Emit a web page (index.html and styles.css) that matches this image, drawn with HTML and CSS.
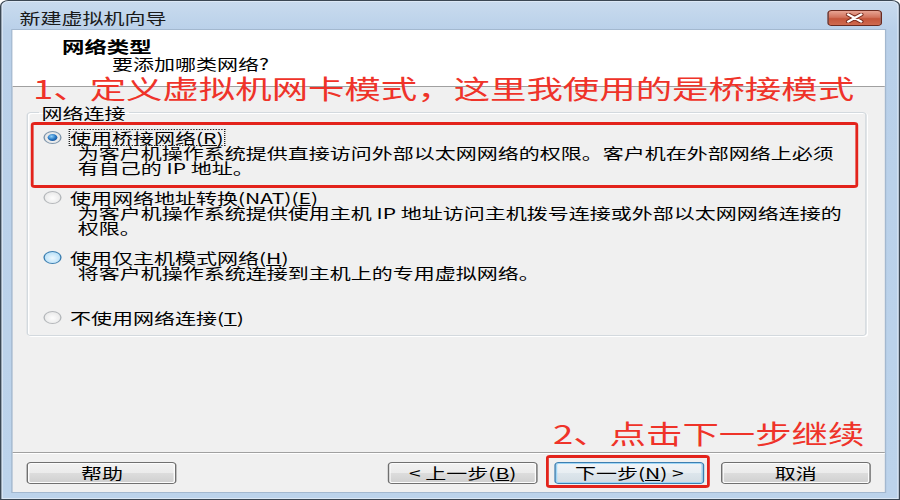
FILE: index.html
```html
<!DOCTYPE html>
<html lang="zh-CN">
<head>
  <meta charset="UTF-8">
  <title>新建虚拟机向导</title>
  <link rel="stylesheet" href="styles.css">
</head>
<body>
  <!-- the shot is stretched sideways, so the whole dialog is drawn narrow and scaled -->
  <div class="stage">
    <div class="window">
      <div class="titlebar">
        <span class="title">新建虚拟机向导</span>
        <span class="close">
          <svg width="13" height="10" viewBox="0 0 13 10">
            <path d="M2 1.5 L11 8.5 M11 1.5 L2 8.5" stroke="#7a2a1c" stroke-width="3.8" stroke-linecap="round"/>
            <path d="M2 1.5 L11 8.5 M11 1.5 L2 8.5" stroke="#fff" stroke-width="2.2" stroke-linecap="round"/>
          </svg>
        </span>
      </div>

      <div class="client">
        <div class="head">
          <div class="head-title">网络类型</div>
          <div class="head-sub">要添加哪类网络?</div>
        </div>

        <div class="main">
          <fieldset class="group">
            <legend>网络连接</legend>

            <div class="opt marked">
              <div class="opt-row"><span class="radio on"></span><span class="label focus">使用桥接网络(<u>R</u>)</span></div>
              <div class="desc">为客户机操作系统提供直接访问外部以太网网络的权限。客户机在外部网络上必须<br>有自己的 IP 地址。</div>
            </div>

            <div class="opt">
              <div class="opt-row"><span class="radio dim"></span><span class="label">使用网络地址转换(NAT)(<u>E</u>)</span></div>
              <div class="desc">为客户机操作系统提供使用主机 IP 地址访问主机拨号连接或外部以太网网络连接的<br>权限。</div>
            </div>

            <div class="opt">
              <div class="opt-row"><span class="radio hot"></span><span class="label">使用仅主机模式网络(<u>H</u>)</span></div>
              <div class="desc">将客户机操作系统连接到主机上的专用虚拟网络。</div>
            </div>

            <div class="opt">
              <div class="opt-row"><span class="radio dim"></span><span class="label">不使用网络连接(<u>T</u>)</span></div>
            </div>
          </fieldset>

          <div class="footer">
            <button class="btn help">帮助</button>
            <button class="btn">&lt; 上一步(<u>B</u>)</button>
            <span class="btn-wrap">
              <button class="btn default">下一步(<u>N</u>) &gt;</button>
              <span class="mark-box"></span>
            </span>
            <button class="btn">取消</button>
          </div>
        </div>

        <div class="note note-1">1、定义虚拟机网卡模式，这里我使用的是桥接模式</div>
        <div class="note note-2">2、点击下一步继续</div>
      </div>
    </div>
  </div>
</body>
</html>
```

FILE: styles.css
```css
body {
  margin: 0;
  overflow: hidden;
  background: #fff;
  font-family: "Noto Sans CJK SC", "Noto Sans", sans-serif;
  font-size: 15px;
  color: #000;
}
.stage {
  width: 642.86px;
  height: 500px;
  transform: scaleX(1.4);
  transform-origin: 0 0;
}
.window {
  box-sizing: border-box;
  height: 500px;
  display: flex;
  flex-direction: column;
  border: 1px solid #3b4753;
  border-radius: 6px 6px 0 0;
  background: linear-gradient(#c9dbee, #b9d0e9 30px, #bcd3eb);
  box-shadow: inset 0 0 0 1px #dce8f5;
}
.titlebar {
  height: 29px;
  box-sizing: border-box;
  padding: 4px 11.9px 0 13px;
  display: flex;
  align-items: center;
  justify-content: space-between;
}
.title {
  line-height: 16px;
  color: #1a1a1a;
}
.close {
  width: 38.6px;
  height: 16px;
  box-sizing: border-box;
  border: 1px solid #6b2a1f;
  border-radius: 3px;
  background: linear-gradient(#e8a493, #d2735d 45%, #c4553b 55%, #cf6a4f);
  display: flex;
  align-items: center;
  justify-content: center;
}
.client {
  flex: 1;
  position: relative;
  margin: 0 9.7px 7px 8.3px;
  display: flex;
  flex-direction: column;
  background: #f0f0f0;
  box-shadow: 0 0 0 1px #a3b8cf;
}
.head {
  height: 57px;
  box-sizing: border-box;
  padding: 8px 0 0 35px;
  background: #fff;
  border-bottom: 1px solid #a0a0a0;
}
.head-title {
  font-weight: bold;
  font-size: 16px;
  line-height: 16px;
}
.head-sub {
  margin-top: 2px;
  padding-left: 35.7px;
  line-height: 16px;
}
.main {
  flex: 1;
  display: flex;
  flex-direction: column;
}
.group {
  margin: 18px 12.8px 0 10px;
  padding: 10px 6px 10px 10.3px;
  border: 1px solid #d3d9de;
  border-radius: 3px;
  box-shadow: inset 1px 1px 0 #fff, 1px 1px 0 #fff;
}
.group legend {
  margin-left: -3px;
  padding: 0 2px;
  line-height: 15px;
}
.opt {
  position: relative;
  min-height: 45px;
  margin-bottom: 15px;
}
.opt:last-child {
  min-height: 0;
  margin-bottom: 0;
}
.opt-row {
  display: flex;
  align-items: center;
  gap: 6.4px;
  height: 15px;
}
.label {
  line-height: 15px;
}
.label.focus {
  outline: 1px dotted #222;
  outline-offset: 0;
}
.desc {
  padding-left: 25px;
  line-height: 15px;
  white-space: nowrap;
}
.radio {
  flex: none;
  position: relative;
  width: 13px;
  height: 13px;
  box-sizing: border-box;
  border-radius: 50%;
  border: 1px solid #8c8f92;
  background: radial-gradient(circle at 50% 55%, #fbfbfb 0, #dcdcdc 100%);
}
.radio.dim {
  border-color: #b5b8bb;
  background: radial-gradient(circle at 50% 55%, #fdfdfd 0, #e3e3e3 100%);
}
.radio.hot {
  border-color: #3c7fb1;
  background: radial-gradient(circle at 50% 55%, #eef8fe 0, #a6d8f6 100%);
}
.radio.on {
  border-color: #7e95ab;
}
.radio.on::after {
  content: "";
  position: absolute;
  inset: 2px;
  border-radius: 50%;
  background: radial-gradient(circle at 40% 35%, #8fd0f8 0, #2473c0 50%, #143f7c 100%);
}
/* red annotation frame round the first option */
.marked::before {
  content: "";
  position: absolute;
  top: -8px;
  left: -9px;
  right: -1px;
  bottom: -13px;
  border: 3px solid #e3231b;
  border-left-width: 2.4px;
  border-right-width: 2.4px;
  border-radius: 3px;
}
.footer {
  margin-top: auto;
  padding: 9px 10.2px 8px 10px;
  display: flex;
  gap: 12px;
  border-top: 1px solid #a0a0a0;
  box-shadow: inset 0 1px 0 #fff;
}
.btn {
  width: 107px;
  height: 22px;
  padding: 0;
  box-sizing: border-box;
  border: 1px solid #707070;
  border-radius: 3px;
  background: linear-gradient(#f2f2f2, #ebebeb 50%, #dddddd 50%, #cfcfcf);
  box-shadow: inset 0 0 0 1px #fcfcfc;
  font-family: inherit;
  font-size: 15px;
  line-height: 20px;
  color: #000;
}
.btn.help {
  margin-right: auto;
}
.btn.default {
  border-color: #3c7fb1;
  box-shadow: inset 0 0 0 1px #9fd6f6;
  background: linear-gradient(#f0f4f7, #e8eef2 50%, #dde6ec 50%, #d3dde4);
}
.btn-wrap {
  position: relative;
  display: flex;
}
.mark-box {
  position: absolute;
  top: -7px;
  left: -6px;
  right: -4px;
  bottom: -4px;
  border: 3px solid #e3231b;
  border-left-width: 2.4px;
  border-right-width: 2.4px;
  border-radius: 3px;
}
.note {
  position: absolute;
  font-size: 26px;
  line-height: 30px;
  color: #ef3329;
  white-space: nowrap;
}
.note-1 {
  left: 14.3px;
  top: 43px;
}
.note-2 {
  left: 385.7px;
  top: 388px;
}
```
